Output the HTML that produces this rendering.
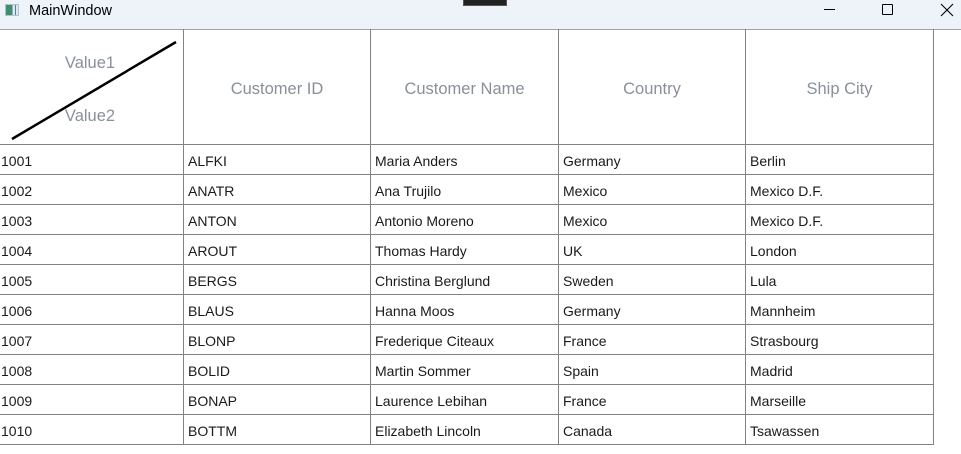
<!DOCTYPE html>
<html><head><meta charset="utf-8"><style>
*{margin:0;padding:0;box-sizing:border-box}
body{width:961px;height:454px;background:#fff;position:relative;overflow:hidden;font-family:"Liberation Sans",sans-serif}
.tb{position:absolute;left:0;top:0;width:961px;height:30px;background:#eef3fa;border-bottom:1px solid #a0a0a0}
.t{position:absolute;font-size:14px;color:#1a1a1a;white-space:nowrap}
.h{position:absolute;font-size:16.5px;color:#8a9099;text-align:center;white-space:nowrap}
.vl{position:absolute;top:29px;width:1px;height:416px;background:#828282}
.hl{position:absolute;left:0;width:934px;height:1px;background:#828282}
</style></head><body>
<div class="tb"></div>
<div style="position:absolute;left:5px;top:4px;width:14px;height:12px;border:1px solid #b8c0c8;background:linear-gradient(90deg,#3d8f6e 0 55%,#dfe8ee 55% 75%,#4a7fb0 75% 85%,#dfe8ee 85%)"></div>
<div class="t" style="left:29px;top:3px;font-size:14.5px;color:#000">MainWindow</div>
<div style="position:absolute;left:463px;top:0;width:44px;height:6px;background:#222;border:1px solid #555;border-top:none"></div>
<div style="position:absolute;left:824px;top:9px;width:11px;height:1px;background:#000"></div>
<div style="position:absolute;left:882px;top:4px;width:11px;height:11px;border:1px solid #000;border-radius:1px"></div>
<svg style="position:absolute;left:940px;top:3px" width="14" height="14"><path d="M1 1L13 13M13 1L1 13" stroke="#000" stroke-width="1.1"/></svg>

<div class="vl" style="left:183px"></div><div class="vl" style="left:370px"></div><div class="vl" style="left:558px"></div><div class="vl" style="left:745px"></div><div class="vl" style="left:933px"></div>
<div class="hl" style="top:144px"></div><div class="hl" style="top:174px"></div><div class="hl" style="top:204px"></div><div class="hl" style="top:234px"></div><div class="hl" style="top:264px"></div><div class="hl" style="top:294px"></div><div class="hl" style="top:324px"></div><div class="hl" style="top:354px"></div><div class="hl" style="top:384px"></div><div class="hl" style="top:414px"></div><div class="hl" style="top:444px"></div>

<svg style="position:absolute;left:0;top:30px" width="183" height="114"><line x1="12" y1="109" x2="176" y2="12" stroke="#000" stroke-width="2.5"/></svg>
<div class="h" style="left:40px;top:54px;width:100px">Value1</div>
<div class="h" style="left:40px;top:107px;width:100px">Value2</div>
<div class="h" style="left:184px;top:80px;width:186px">Customer ID</div>
<div class="h" style="left:371px;top:80px;width:187px">Customer Name</div>
<div class="h" style="left:559px;top:80px;width:186px">Country</div>
<div class="h" style="left:746px;top:80px;width:187px">Ship City</div>

<div class="t" style="left:1px;top:153px">1001</div><div class="t" style="left:188px;top:153px">ALFKI</div><div class="t" style="left:375px;top:153px">Maria Anders</div><div class="t" style="left:563px;top:153px">Germany</div><div class="t" style="left:750px;top:153px">Berlin</div>
<div class="t" style="left:1px;top:183px">1002</div><div class="t" style="left:188px;top:183px">ANATR</div><div class="t" style="left:375px;top:183px">Ana Trujilo</div><div class="t" style="left:563px;top:183px">Mexico</div><div class="t" style="left:750px;top:183px">Mexico D.F.</div>
<div class="t" style="left:1px;top:213px">1003</div><div class="t" style="left:188px;top:213px">ANTON</div><div class="t" style="left:375px;top:213px">Antonio Moreno</div><div class="t" style="left:563px;top:213px">Mexico</div><div class="t" style="left:750px;top:213px">Mexico D.F.</div>
<div class="t" style="left:1px;top:243px">1004</div><div class="t" style="left:188px;top:243px">AROUT</div><div class="t" style="left:375px;top:243px">Thomas Hardy</div><div class="t" style="left:563px;top:243px">UK</div><div class="t" style="left:750px;top:243px">London</div>
<div class="t" style="left:1px;top:273px">1005</div><div class="t" style="left:188px;top:273px">BERGS</div><div class="t" style="left:375px;top:273px">Christina Berglund</div><div class="t" style="left:563px;top:273px">Sweden</div><div class="t" style="left:750px;top:273px">Lula</div>
<div class="t" style="left:1px;top:303px">1006</div><div class="t" style="left:188px;top:303px">BLAUS</div><div class="t" style="left:375px;top:303px">Hanna Moos</div><div class="t" style="left:563px;top:303px">Germany</div><div class="t" style="left:750px;top:303px">Mannheim</div>
<div class="t" style="left:1px;top:333px">1007</div><div class="t" style="left:188px;top:333px">BLONP</div><div class="t" style="left:375px;top:333px">Frederique Citeaux</div><div class="t" style="left:563px;top:333px">France</div><div class="t" style="left:750px;top:333px">Strasbourg</div>
<div class="t" style="left:1px;top:363px">1008</div><div class="t" style="left:188px;top:363px">BOLID</div><div class="t" style="left:375px;top:363px">Martin Sommer</div><div class="t" style="left:563px;top:363px">Spain</div><div class="t" style="left:750px;top:363px">Madrid</div>
<div class="t" style="left:1px;top:393px">1009</div><div class="t" style="left:188px;top:393px">BONAP</div><div class="t" style="left:375px;top:393px">Laurence Lebihan</div><div class="t" style="left:563px;top:393px">France</div><div class="t" style="left:750px;top:393px">Marseille</div>
<div class="t" style="left:1px;top:423px">1010</div><div class="t" style="left:188px;top:423px">BOTTM</div><div class="t" style="left:375px;top:423px">Elizabeth Lincoln</div><div class="t" style="left:563px;top:423px">Canada</div><div class="t" style="left:750px;top:423px">Tsawassen</div>
</body></html>
